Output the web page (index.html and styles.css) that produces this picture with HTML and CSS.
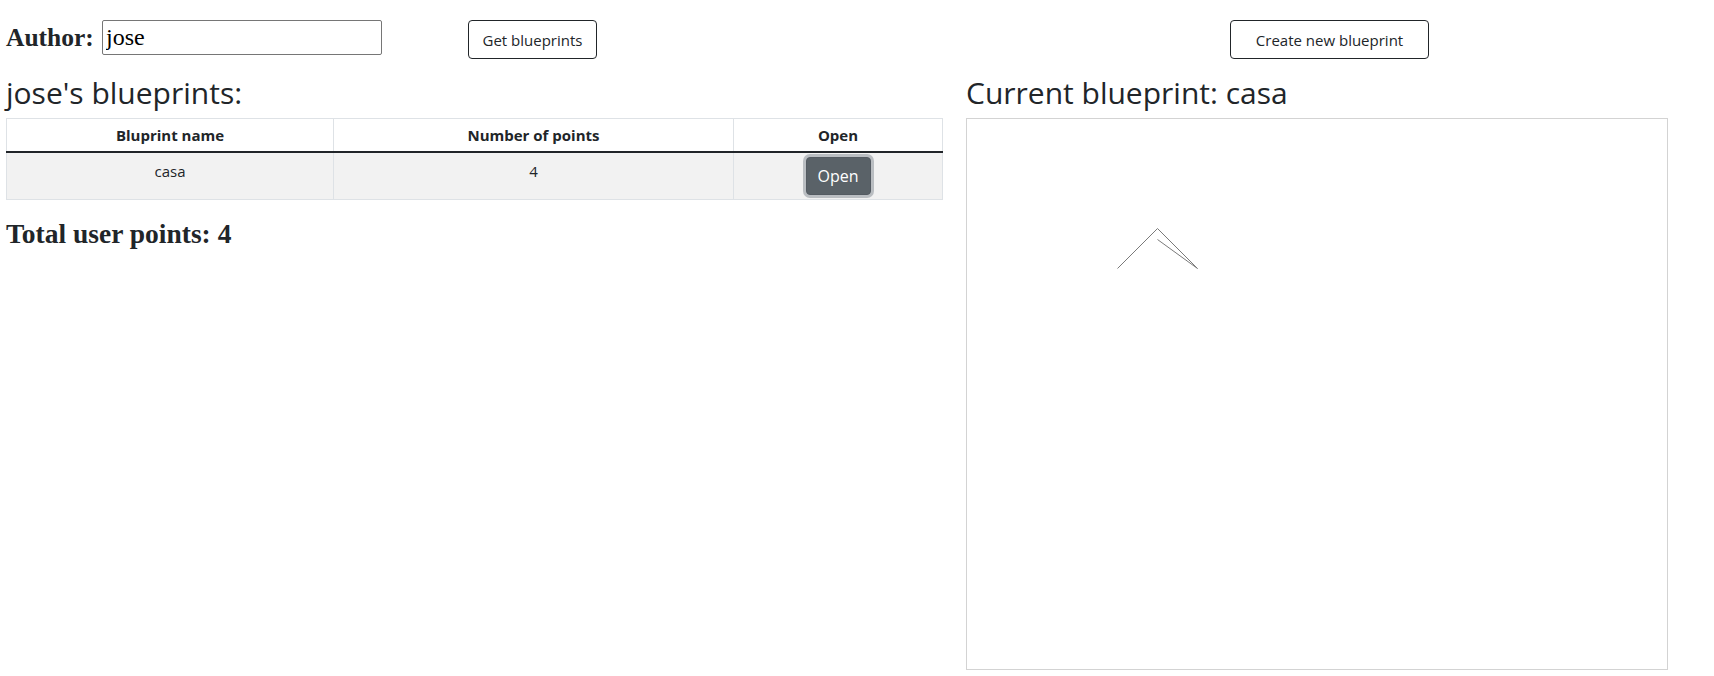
FILE: index.html
```html
<!DOCTYPE html>
<html lang="en">
<head>
<meta charset="utf-8">
<title>Blueprints</title>
<link rel="stylesheet" href="styles.css">
</head>
<body>
<div class="page">
  <div class="toprow">
    <div class="authorform">
      <label class="authorlabel" for="author">Author:</label>
      <input class="authorinput" id="author" type="text" value="jose">
      <button class="btn btn-outline btn-get" type="button">Get blueprints</button>
    </div>
    <div class="createcell">
      <button class="btn btn-outline btn-create" type="button">Create new blueprint</button>
    </div>
  </div>
  <div class="main">
    <div class="leftcol">
      <h2 class="title">jose's blueprints:</h2>
      <table class="bptable">
        <thead>
          <tr>
            <th class="c1">Bluprint name</th>
            <th class="c2">Number of points</th>
            <th class="c3">Open</th>
          </tr>
        </thead>
        <tbody>
          <tr>
            <td>casa</td>
            <td>4</td>
            <td><button class="btn btn-open" type="button">Open</button></td>
          </tr>
        </tbody>
      </table>
      <h3 class="total">Total user points: 4</h3>
    </div>
    <div class="rightcol">
      <h2 class="title">Current blueprint: casa</h2>
      <div class="canvas">
        <svg class="drawing" width="700" height="550" viewBox="0 0 700 550" xmlns="http://www.w3.org/2000/svg">
          <polyline points="150.5,149.5 190.5,109.5 230.5,149.5 190.5,120.5" fill="none" stroke="#7a7a7a" stroke-width="1"/>
        </svg>
      </div>
    </div>
  </div>
</div>
</body>
</html>
```
FILE: styles.css
```css
* { box-sizing: border-box; }

body {
  margin: 0;
  font-family: "Open Sans", "Noto Sans", sans-serif;
  color: #212529;
  background: #fff;
}

.page {
  padding: 20px 6px 0 6px;
}

.toprow {
  display: grid;
  grid-template-columns: 936px 1fr;
  column-gap: 24px;
}

.authorform {
  display: flex;
  align-items: flex-start;
}

.authorlabel {
  width: 96px;
  padding-top: 3px;
  font-family: "Liberation Serif", serif;
  font-weight: 700;
  font-size: 25.5px;
  line-height: 30px;
  color: #212529;
  white-space: nowrap;
}

.authorinput {
  width: 280px;
  height: 35px;
  margin: 0;
  padding: 0 3px;
  border: 1px solid #767676;
  border-radius: 2px;
  font-family: "Liberation Serif", serif;
  font-size: 24px;
  color: #000;
  background: #fff;
}

.btn {
  font-family: "Open Sans", "Noto Sans", sans-serif;
  font-size: 15px;
  line-height: 22px;
  border-radius: 4px;
  cursor: pointer;
  white-space: nowrap;
}

.btn-outline {
  height: 39px;
  padding: 0;
  background: #fff;
  color: #212529;
  border: 1px solid #212529;
}

.btn-get {
  width: 129px;
  margin-left: 86px;
}

.createcell {
  padding-left: 264px;
}

.btn-create {
  width: 199px;
}

.main {
  display: grid;
  grid-template-columns: 936px 702px;
  column-gap: 24px;
  margin-top: 16px;
}

.title {
  margin: 0 0 7px 0;
  font-weight: 400;
  font-size: 30px;
  line-height: 36px;
  color: #212529;
}

.bptable {
  width: 936px;
  border-collapse: collapse;
  table-layout: fixed;
  font-size: 15px;
}

.bptable th,
.bptable td {
  border: 1px solid #dee2e6;
  text-align: center;
  vertical-align: top;
}

.bptable th {
  padding: 5px 6px;
  line-height: 22px;
  font-weight: 700;
  border-bottom: 2px solid #212529;
}

.bptable td {
  padding: 6px 6px 4px 6px;
  line-height: 24px;
  background: #f2f2f2;
}

.c1 { width: 327px; }
.c2 { width: 400px; }
.c3 { width: 209px; }

.btn-open {
  display: inline-block;
  vertical-align: top;
  width: 65px;
  height: 38px;
  margin: -2px 0 0 0;
  padding: 0;
  font-size: 16px;
  color: #fff;
  background: #5a6268;
  border: 1px solid #545b62;
  box-shadow: 0 0 0 3px rgba(130, 138, 145, 0.5);
}

.total {
  margin: 18px 0 0 0;
  font-family: "Liberation Serif", serif;
  font-weight: 700;
  font-size: 27.5px;
  line-height: 31px;
  color: #212529;
}

.canvas {
  width: 702px;
  height: 552px;
  border: 1px solid #d3d3d3;
  background: #fff;
}

.drawing {
  display: block;
}
```
